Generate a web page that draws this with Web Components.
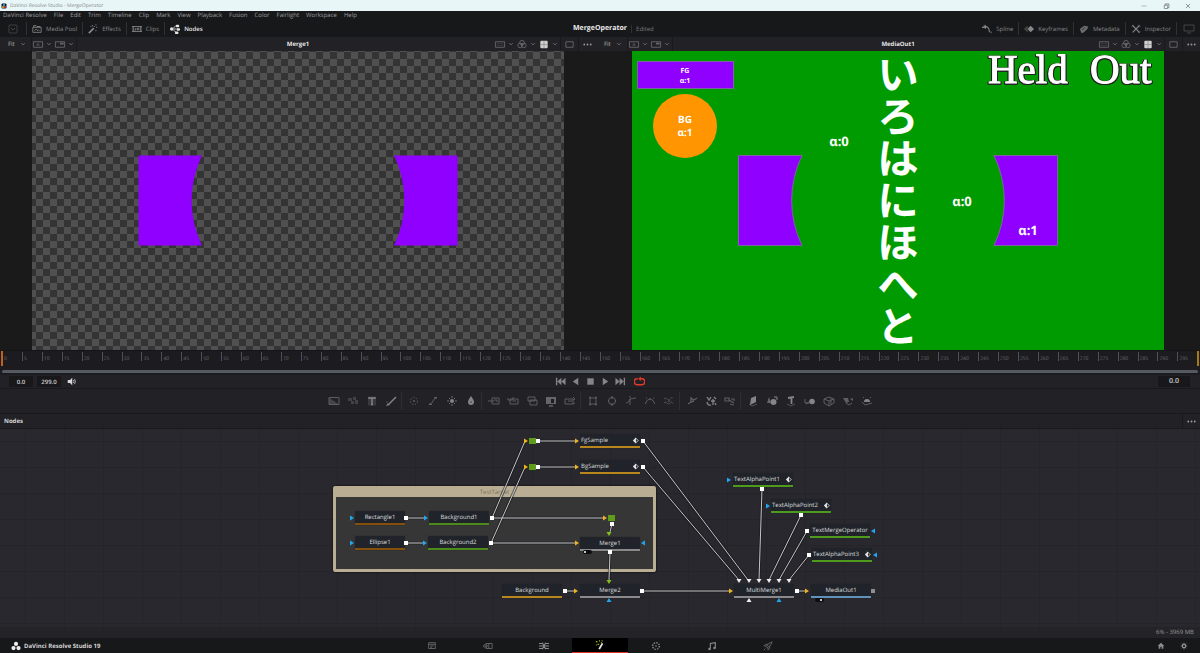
<!DOCTYPE html>
<html lang="en">
<head>
<meta charset="utf-8">
<title>DaVinci Resolve Studio - MergeOperator</title>
<style>
  html, body { margin: 0; background: #17181a; }
  body { font: 6px/8px "Open Sans", "Noto Sans", "Noto Sans CJK JP", sans-serif; color: #8c8c8e; text-rendering: geometricPrecision; }
</style>
</head>
<body>
<resolve-app></resolve-app>

<script>
const ICONS = {
  panel: '<rect x="2" y="2" width="8" height="8" rx="1" opacity=".4"/><path d="M4 5l2 2 2-2" opacity=".5"/>',
  media: '<path d="M2 4V2h3l1 1h4M1 4h10v6H1zM3 8l2-2 2 2 1-1 1 1"/>',
  wand: '<path d="M1 11l6-6" stroke-width="2"/><path d="M5 2h1M9 1h1M10 4h1M9 8h1M3 3h1M7 3h1" stroke-width="1.4"/>',
  clips: '<path d="M0 3h12v6H0zM2 3v6M10 3v6M4 5v3M6 5h2v2H6z"/>',
  nodes: '<g class="f"><circle cx="2" cy="6" r="2"/><rect x="7" y="1" width="4" height="3" rx="1"/><rect x="8" y="5" width="4" height="3" rx="1"/><rect x="6" y="9" width="4" height="3" rx="1"/></g><path d="M3 6h5M4 5l3-3M4 7l3 3"/>',
  spline: '<path d="M0 4h5M2 2l5 2q2 2 2 6" stroke-width="1.3"/><path d="M4 1v5M11 9v2" />',
  keys: '<path class="f" d="M8 2l4 4-4 4-4-4z"/><path class="f" d="M4 2L0 6l4 4 1-2-2-2 2-2z" opacity=".4"/>',
  meta: '<path d="M1 6l5-4 5 1-1 3-4 4-3 1z" class="f" opacity=".75"/><path d="M4 7l3-3" stroke="#17181a"/>',
  tools: '<path d="M2 2l8 8M10 2l-8 8" stroke-width="1.5"/><path d="M1 3l2-2M9 11l2-2M9 1l2 2"/>',
  monitor: '<path d="M1 2h10v6H1zM4 10h4" opacity=".45"/>',
  lut: '<path d="M1 3h10v6H1z"/><path class="f" d="M6 4l2 3H4z" opacity=".7"/>',
  dual: '<path d="M1 3h10v6H1z"/><path class="f" d="M6 4h4v2H6z"/>',
  frame: '<path d="M1 3h10v6H1z"/><path d="M3 5h6v2H3z" opacity=".35"/>',
  rect: '<path d="M2 3h8v6H2z"/>',
  rgb: '<circle cx="6" cy="4" r="2.5"/><circle cx="4" cy="7" r="2.5"/><circle cx="8" cy="7" r="2.5"/><circle class="f" cx="6" cy="6" r="1.5"/>',
  grid: '<rect class="f" x="2" y="2" width="8" height="8" rx="1"/><path d="M2 6h8M6 2v8" stroke="#77777b" stroke-width=".6"/>',
  chev: '<path d="M4 5l2 2 2-2"/>',
  dots: '<g class="f"><circle cx="2.5" cy="6" r="1"/><circle cx="6" cy="6" r="1"/><circle cx="9.500" cy="6" r="1"/></g>',
  min: '<path d="M3 6h6" opacity=".5"/>',
  restore: '<path d="M4 5h4v4H4zM5 5V3.500h4.500V8H8" stroke-width=".8"/>',
  close: '<path d="M3.500 3.500l5 5M8.500 3.500l-5 5" stroke-width=".8"/>',
  speaker: '<path class="f" d="M1 4h3l3-3v10L4 8H1z"/><path d="M8.500 4q1.500 2 0 4M10 2.500q2.500 3.500 0 7"/>',
  first: '<path class="f" d="M1 2h1.500v8H1zM7 2v8L2.500 6zM11.500 2v8L7 6z"/>',
  back: '<path class="f" d="M9 2v8L3 6z"/>',
  stop: '<rect class="f" x="2.500" y="2.500" width="7" height="7"/>',
  play: '<path class="f" d="M3 2v8l6-4z"/>',
  last: '<path class="f" d="M9.500 2H11v8H9.500zM5 2v8l4.500-4zM.500 2v8L5 6z"/>',
  loop: '<path d="M4 3H3.500a2.500 2.500 0 000 6.500h5a2.500 2.500 0 000-6.500H6.500" stroke-width="1.6"/><path class="f" d="M7.500.500v5L4.500 3z"/>',
  bg: '<path d="M1 2.500h10v7H1z"/><path class="f" opacity=".6" d="M1 2.500l10 7H1z"/>',
  noise: '<g class="f" opacity=".55"><rect x="1" y="3" width="4" height="3"/><rect x="6" y="2" width="3" height="3"/><rect x="4" y="6" width="3" height="3"/><rect x="8" y="5" width="3" height="4"/></g>',
  text: '<rect class="f" x="2" y="1.500" width="8" height="9" opacity=".25"/><path d="M3 4V3h6v1M6 3v6M5 9.500h2" stroke-width="1.400"/>',
  brush: '<path d="M4 9l7-7" stroke-width="1.500"/><path class="f" d="M1 11l2-3 2 2z"/><path d="M2 6v2" opacity=".4"/>',
  tracker: '<circle cx="6" cy="6" r="3.500" stroke-dasharray="1.500 1.500"/><circle class="f" cx="6" cy="6" r="1"/>',
  curve: '<path d="M2 9q3 0 4-3t4-3M2 9.500h3M7 2.500h3"/>',
  bright: '<circle class="f" cx="6" cy="6" r="2"/><path d="M6 1v2M6 9v2M1 6h2M9 6h2M3 3l1 1M8 8l1 1M9 3L8 4M4 8L3 9" stroke-width=".8"/>',
  drop: '<path class="f" d="M6 1q3 4 3 6a3 3 0 01-6 0q0-2 3-6z"/><path d="M6 6v2" stroke="#444"/>',
  mergeA: '<path d="M4 3h7v6H4zM0 6h6M6 5h3v2" />',
  mergeB: '<path d="M3 4h8v5H3zM1 3v2h5V2M6 6h3" />',
  layers: '<path d="M2 2h7v4H2zM4 5h7v5H4z"/><path class="f" opacity=".4" d="M4 5h7v1H4z"/>',
  matte: '<rect class="f" x="1" y="2" width="10" height="7" opacity=".7"/><path fill="#1e1e22" stroke="none" d="M6 4h3v4H6z"/><path d="M4 11h4"/>',
  resize: '<path d="M1 4h8v5H1zM9 2l2 2-2 1M4 6h4M9 9l2-1" />',
  mrect: '<path d="M3 3h6v6H3z"/><path d="M2 2.500h2M8 2.500h2M2 9.500h2M8 9.500h2" stroke-width="1.500"/>',
  mell: '<circle cx="6" cy="6" r="3.500"/><path d="M5 2.500h2M2 6h1M9 6h1M5 9.500h2" stroke-width="1.800"/>',
  poly: '<path d="M1 8q3 0 4-4l6-1M5 4v6M4 2h2" />',
  bsp: '<path d="M1 9q2-5 5-5t5 5M2 3h1M9 3h1M5 4h2" />',
  ranges: '<path d="M1 4q2-2 3 0t3 0 3-1M1 8q2-2 3 0t3 0 3 1M5 6h3" stroke-dasharray="2 .700"/>',
  pemit: '<path d="M2 9l3-2V3l3 2 3-2M5 7l3-1" stroke-width="1.400"/>',
  prend: '<path d="M2 2l2 3 2-3M2 7q1 4 4 3M6 6h4M8 4v6M9 2l2 2M10 8l1 2" stroke-width="1.300"/>',
  pmerge: '<path d="M1 3h4v3H1zM5 5l5 3M7 4h3v2M6 9l4 1" stroke-width="1.200"/>',
  plane: '<path class="f" d="M4 3l5-2v6L3 10z"/><path d="M2 9l3 2 5-2" opacity=".5"/>',
  shapes: '<path class="f" d="M3 2l2 6H1z" opacity=".7"/><circle class="f" cx="7.500" cy="7" r="3"/><path d="M8 2h3v3"/>',
  t3d: '<path d="M3 3l6-1M6.500 3v6" stroke-width="1.800"/><path d="M2 9l4 2 4-2" opacity=".5"/>',
  sphere: '<circle class="f" cx="8" cy="6.500" r="2.800"/><path d="M1 4v4h4M2 9l3-2" opacity=".6"/>',
  cube: '<path d="M1 4l5-2 5 2v4l-5 3-5-3zM1 4l5 2 5-2M6 6v5M8 3v6"/>',
  camera: '<path class="f" d="M1 3h5l1 4-3 1zM8 4l3-1v3z"/><path d="M4 8l3 2 3-2"/>',
  spot: '<path class="f" d="M3 7a3 3 0 016 0z"/><path d="M1 7l3 3 7-2M2 3l1-1M9 2l1 1" opacity=".6"/>',
  logo: '<g class="f"><circle cx="6" cy="3.500" r="2.500"/><circle cx="3" cy="8.500" r="2.500"/><circle cx="9" cy="8.500" r="2.500"/></g>',
  applogo: '<rect x="1" y="1" width="10" height="10" rx="2" fill="#101828" stroke="none"/><circle cx="6" cy="4" r="2" fill="#38b6e8" stroke="none"/><circle cx="4" cy="8" r="2" fill="#e8c12a" stroke="none"/><circle cx="8" cy="8" r="2" fill="#e2394a" stroke="none"/>',
  pmedia: '<path d="M2 2h8v7H2zM2 4h8M4 6h4M4 7.500h2" />',
  pcut: '<path d="M4 3h7v6H4zM4 3L0 6l4 3M7 3v6M2 6h4"/>',
  pedit: '<path d="M0 3h5M7 3h5M0 6h12M0 9h5M7 9h5M4 2l4 8M8 2L4 10" stroke-width="1.300"/>',
  pfusion: '<path d="M5 11l4-7" stroke="#e8e8e8" stroke-width="2.200"/><path d="M1 2h2M5 1h1M3 5h2M8 1h1M7 3h1M1 6h1" stroke="#c4d42a" stroke-width="1.300"/>',
  pcolor: '<circle cx="6" cy="6" r="4" stroke-dasharray="1.800 1.300" stroke-width="1.600"/><circle class="f" cx="6" cy="6" r="1"/>',
  pnote: '<path d="M4 9V3l6-1v6" stroke-width="1.300"/><g class="f"><circle cx="3" cy="9.500" r="1.500"/><circle cx="9" cy="8.500" r="1.500"/></g>',
  pdeliver: '<path d="M4 7q2-5 7-6-1 5-6 7zM4 6H1l2-2h3M6 8v3l2-2V6M3 9l-2 2"/>',
  home: '<path class="f" d="M6 1l5 5H9.500v4h-2.500V7H5v3H2.500V6H1z"/>',
  gear: '<circle cx="6" cy="6" r="2.600" stroke-width="2"/><path d="M6 1v2M6 9v2M1 6h2M9 6h2M2.500 2.500l1 1M8.500 8.500l1 1M9.500 2.500l-1 1M3.500 8.500l-1 1"/>'
};

function define(name, render, css) {
  customElements.define(name, class extends HTMLElement {
    connectedCallback() {
      if (this.shadowRoot) return;
      const root = this.attachShadow({ mode: "open" });
      const tpl = document.createElement("template");
      tpl.innerHTML = `<style>*{box-sizing:border-box}button,input,select{font:inherit;color:inherit;background:none;border:0;margin:0;padding:0;border-radius:0;text-rendering:inherit}${css}</style>${render(this)}`;
      root.append(tpl.content.cloneNode(true));
    }
  });
}

define("ui-icon", el => `<svg viewBox="0 0 12 12" aria-hidden="true">${ICONS[el.getAttribute("name")]}</svg>`,
  `:host{display:block;width:12px;height:12px;flex:none}
   svg{display:block;width:100%;height:100%;fill:none;stroke:currentColor;stroke-width:1}
   .f{fill:currentColor;stroke:none}`);

define("title-bar", () => `<ui-icon name="applogo"></ui-icon><span>DaVinci Resolve Studio - MergeOperator</span>
  <nav><button aria-label="Minimize"><ui-icon name="min"></ui-icon></button><button aria-label="Restore"><ui-icon name="restore"></ui-icon></button><button aria-label="Close"><ui-icon name="close"></ui-icon></button></nav>`,
  `:host{display:flex;align-items:center;height:11px;background:#e8f6f8;color:#85888c;font-size:5px;gap:3px;padding:0 1px}
   :host>ui-icon{width:6px;height:6px} nav{margin-left:auto;display:flex} button{width:22px;display:flex;justify-content:center} nav ui-icon{color:#666;width:10px;height:10px}`);

define("menu-bar", () => ["DaVinci Resolve","File","Edit","Trim","Timeline","Clip","Mark","View","Playback","Fusion","Color","Fairlight","Workspace","Help"].map(m => `<button>${m}</button>`).join(""),
  `:host{display:flex;height:9px;padding:0 3px;gap:7px;background:#17181a;color:#9e9ea0} button{line-height:9px}`);

define("tool-button", el => `<button><ui-icon name="${el.getAttribute("icon")}"></ui-icon><slot></slot></button>`,
  `:host{display:block;color:#88888a} :host([active]){color:#e4e4e4;font-weight:600}
   button{height:13px;padding:0 5px;display:flex;align-items:center;gap:4px} ui-icon{width:10px;height:10px}`);

define("tool-bar", () => `
  <div class="g l"><button class="p" aria-label="Panels"><ui-icon name="panel"></ui-icon></button>
    <tool-button icon="media">Media Pool</tool-button><tool-button icon="wand">Effects</tool-button><tool-button icon="clips">Clips</tool-button><tool-button icon="nodes" active>Nodes</tool-button></div>
  <strong>MergeOperator</strong>
  <div class="g"><span class="ed">Edited</span><div class="g r"><tool-button icon="spline">Spline</tool-button><tool-button icon="keys">Keyframes</tool-button><tool-button icon="meta">Metadata</tool-button><tool-button icon="tools">Inspector</tool-button><button class="p m" aria-label="Monitor"><ui-icon name="monitor"></ui-icon></button></div></div>`,
  `:host{display:grid;grid-template-columns:1fr auto 1fr;align-items:center;height:17px;background:#17181a}
   .g{display:flex;align-items:center} .r{margin-left:auto} .r>*+*,.l>*+*{border-left:1px solid #303134}
   .p{width:26px;height:13px;display:flex;justify-content:center;align-items:center;color:#77777a} .m{width:24px}
   strong{font-size:7px;color:#ececec} .ed{margin-left:4px;padding-left:4px;border-left:1px solid #303134;color:#77777a}`);

define("viewer-panel", el => {
  const pair = (n, l) => `<button class="pair ${n}" aria-label="${l}"><ui-icon name="${n}"></ui-icon><ui-icon class="c" name="chev"></ui-icon></button>`;
  return `<header><div class="l"><label class="fit"><select aria-label="Zoom"><option>Fit</option></select><ui-icon class="c" name="chev"></ui-icon></label><i></i>${pair("lut","Lookup")}${pair("dual","Dual view")}<i></i></div>
    <strong>${el.getAttribute("label")}</strong>
    <div class="r">${pair("frame","Region")}${pair("rgb","Channels")}${pair("grid","Guides")}<i></i><button class="one" aria-label="Single view"><ui-icon name="rect"></ui-icon></button><i></i><button class="one d" aria-label="Options"><ui-icon name="dots"></ui-icon></button></div></header>
    <div class="stage"><slot></slot></div>`; },
  `:host{display:block;background:#1a1a1a;min-width:0}
   header{display:grid;grid-template-columns:1fr auto 1fr;align-items:center;height:14px;background:#212126}
   .l,.r{display:flex;align-items:center;color:#66666a} .r{justify-content:flex-end}
   .fit{display:flex;align-items:center;width:31px;padding-left:8px;color:#b0b0b2} select{appearance:none;width:10px;height:12px;line-height:12px}
   i{width:1px;height:14px;background:#19191c} .pair{display:flex;align-items:center;width:22px} .pair ui-icon{width:12px;height:11px} .pair .c,.c{width:10px;height:10px;color:#7c7c80}
   .grid ui-icon:first-child{color:#cfcfcf} .one{width:17px;display:flex;justify-content:center} .d{color:#9a9a9c}
   .one ui-icon{width:11px;height:11px}
   strong{color:#e4e4e4;font-weight:700} .stage{padding:0 var(--inset,32px)}`);

const HOLD_L = "M106.500 104.500H170A103 103 0 00170 194.500H106.500z", HOLD_R = "M425.500 104.500H362A103 103 0 01362 194.500H425.500z";
define("merge-picture", () => `<svg viewBox="0 0 532 299" role="img" aria-label="Merge1 output">
   <defs><pattern id="ck" x="4" y="1" width="14" height="14" patternUnits="userSpaceOnUse"><rect width="14" height="14" fill="#505050"/><path d="M0 0h7v7H0zM7 7h7v7H7z" fill="#343434"/></pattern></defs>
   <rect width="532" height="299" fill="url(#ck)"/><path d="${HOLD_L}${HOLD_R}" fill="#9000ff"/></svg>`,
  `:host,svg{display:block} svg{width:100%}`);

define("media-picture", () => `<svg viewBox="0 0 532 299" role="img" aria-label="MediaOut1 output">
   <rect width="532" height="299" fill="#009b00"/>
   <g fill="#9000ff" stroke="#7c64a0" stroke-width="1"><path d="${HOLD_L}"/><path d="${HOLD_R}"/><rect x="5.500" y="10.500" width="96" height="27"/></g>
   <circle cx="53" cy="75" r="32" fill="#ff9500"/>
   <g class="t"><text x="53" y="22" font-size="7">FG</text><text x="53" y="32" font-size="7">α:1</text><text x="53" y="72" font-size="10">BG</text><text x="53" y="85" font-size="10">α:1</text>
   <text x="207" y="95" font-size="13">α:0</text><text x="330" y="155" font-size="13">α:0</text><text x="396" y="184" font-size="13">α:1</text></g>
   <text class="k" x="266" y="2">いろはにほへと</text>
   <g class="h"><text x="356" y="32">Held</text><text x="458" y="32">Out</text></g></svg>`,
  `:host,svg{display:block} svg{width:100%;overflow:visible} text{fill:#fff} .t{font-family:"Noto Sans",sans-serif;font-weight:700;text-anchor:middle}
   .k{font:700 42px "Noto Sans CJK JP",sans-serif;writing-mode:vertical-rl}
   .h{font:41px/41px "Liberation Serif",serif} .h text{stroke:#fff;stroke-width:1;filter:drop-shadow(1px 0 0 #222) drop-shadow(-1px 0 0 #222) drop-shadow(0 1px 0 #222)}`);

define("time-ruler", () => `<div class="ticks">${Array.from({length:60},(_, i) => `<span>${i*5}</span>`).join("")}</div><div class="bar"></div>`,
  `:host{display:block;background:#1c1c20;border-top:1px solid #151517;height:25px}
   .ticks{display:flex;height:15px;margin:0 1px;border-left:2px solid #c2611c;border-right:2px solid #a87a16}
   span{flex:1 1 0;min-width:0;height:9px;margin-top:1px;padding-left:1px;border-left:1px solid #505054;color:#6a6a6e;font-size:5px;line-height:14px}
   span:first-child{border-color:transparent;padding:0}
   .bar{margin:4px 2px 0;height:3px;border-radius:2px;background:#555962}`);

define("transport-bar", () => `<div class="l"><input aria-label="Start" value="0.0"><input aria-label="End" value="299.0"><button aria-label="Audio"><ui-icon name="speaker"></ui-icon></button></div>
  <div class="c">${["first","back","stop","play","last","loop"].map(n => `<button class="${n}" aria-label="${n}"><ui-icon name="${n}"></ui-icon></button>`).join("")}</div>
  <div class="r"><input aria-label="Current time" value="0.0"></div>`,
  `:host{display:grid;grid-template-columns:1fr auto 1fr;align-items:center;height:14px;background:#212126;border-bottom:1px solid #19191c}
   div{display:flex;align-items:center} .l{padding-left:9px;gap:4px} input{width:24px;height:11px;background:#18181a;color:#cfcfcf;text-align:center;font-weight:600}
   .l button{color:#d8d8d8;margin-left:2px} .l ui-icon{width:9px;height:9px} .c{color:#858587;padding-left:3px} .c button{width:15px;display:flex;justify-content:center} .c .loop{width:23px;color:#e0392b} .c ui-icon{width:11px;height:11px}
   .r{justify-content:flex-end;padding-right:10px} .r input{width:32px;font-size:7px}`);

define("effects-bar", () => [["bg","noise","text","brush"],["tracker","curve","bright","drop"],["mergeA","mergeB","layers","matte","resize"],["mrect","mell","poly","bsp","ranges"],["pemit","prend","pmerge"],["plane","shapes","t3d","sphere","cube","camera","spot"]]
  .map(g => `<div>${g.map(n => `<button class="${n}" aria-label="${n}"><ui-icon name="${n}"></ui-icon></button>`).join("")}</div>`).join(""),
  `:host{display:flex;justify-content:center;align-items:center;height:25px;background:#212126;color:#5e5e61;border-bottom:1px solid #19191c}
   div{display:flex} div+div{border-left:1px solid #2f2f33;margin-left:1px;padding-left:2px} button{width:19px;height:18px;display:flex;justify-content:center;align-items:center}
   .text,.bright,.drop,.prend,.matte,.brush,.plane,.shapes,.sphere,.spot,.t3d{color:#858588} ui-icon{width:12px;height:12px}`);

define("graph-node", el => `<span><slot></slot></span>${el.hasAttribute("lock") ? '<svg viewBox="0 0 8 8" aria-hidden="true"><path d="M4 1L1 4l3 3z" fill="#e8e8e8"/><path d="M4 1l3 3-3 3z" fill="none" stroke="#e8e8e8"/></svg>' : ""}`,
  `:host{position:absolute;width:60px;height:14px;display:flex;align-items:center;justify-content:center;background:#20242a;border-radius:2px 2px 0 0;box-shadow:0 0 1px #15161a;border-bottom:2px solid var(--tone,#8a8a8c);box-sizing:border-box;color:#dededf;white-space:nowrap}
   :host([small]){width:50px} :host([lock]){justify-content:space-between;padding:0 1px} svg{width:7px;height:7px}`);

const NODES = [["FgSample",580,434,"#b8861c","lock"],["BgSample",580,460,"#b8861c","lock"],["Rectangle1",355,511,"#85500c","small"],["Ellipse1",355,536,"#85500c","small"],["Background1",429,511,"#4d8a1c",""],["Background2",428,536,"#4d8a1c",""],["Merge1",580,537,"#8a8a8c",""],["Background",502,584,"#b8861c",""],["Merge2",580,584,"#8a8a8c",""],["TextAlphaPoint1",733,473,"#4d9a1c","lock"],["TextAlphaPoint2",771,499,"#4d9a1c","lock"],["TextMergeOperator",810,524,"#4d9a1c",""],["TextAlphaPoint3",812,548,"#4d9a1c","lock"],["MultiMerge1",734,584,"#8a8a8c",""],["MediaOut1",811,584,"#5f92ba",""]];
const EDGES = [[406,518,424,518],[406,543,423,543],[492,518,603,518],[491,543,575,543],[492,518,525,441],[491,543,525,467],[538,441,575,441],[538,467,575,467],[612,524,610,532],[610,552,609,580],[565,591,574,591],[642,591,729,591],[643,441,748,580],[643,467,739,580],[762,489,759,580],[801,515,769,580],[807,531,779,580],[809,555,789,580],[797,591,805,591]];
const OUTS = [[406,518],[406,543],[492,518],[491,543],[538,441],[538,467],[612,524],[610,552],[565,591],[642,591],[643,441],[643,467],[762,489],[801,515],[807,531],[809,555],[797,591]];
const Y = "#f0b41c", B = "#22a7ee", G = "#7cc41c", W = "#eeeeee";
const PINS = [[352,518,0,B],[352,543,0,B],[426,518,0,B],[425,543,0,B],[605,518,0,Y],[577,543,0,Y],[526,441,0,Y],[526,467,0,Y],[577,441,0,Y],[577,467,0,Y],[576,591,0,Y],[731,591,0,Y],[807,591,0,Y],[729,480,0,B],[768,506,0,B],[643,543,180,B],[873,531,180,B],[875,555,180,B],[609,534,90,G],[609,582,90,G],[739,581,90,W],[749,581,90,W],[759,581,90,W],[769,581,90,W],[779,581,90,W],[789,581,90,W],[609,600,270,B],[779,600,270,B],[749,600,270,W]];

define("node-graph", () => `<section class="group"><h2>TestTarget</h2></section>
  ${NODES.map(([t,x,y,c,a]) => `<graph-node ${a} style="left:${x}px;top:${y-429}px;--tone:${c}">${t}</graph-node>`).join("")}
  <svg aria-hidden="true"><g transform="translate(0 -429)">
  <g stroke="#15161a" stroke-width="3" opacity=".5">${EDGES.map(e => `<path d="M${e[0]} ${e[1]}L${e[2]} ${e[3]}"/>`).join("")}</g>
  <g stroke="#c4c4c6" stroke-width="1">${EDGES.map(e => `<path d="M${e[0]} ${e[1]}L${e[2]} ${e[3]}"/>`).join("")}</g>
  ${OUTS.map(o => `<rect x="${o[0]-2}" y="${o[1]-2}" width="4" height="4" fill="#fff"/>`).join("")}
  ${PINS.map(p => `<path transform="translate(${p[0]} ${p[1]}) rotate(${p[2]})" d="M-2-2.500L2 0-2 2.500z" fill="${p[3]}"/>`).join("")}
  <g fill="#5f9c1c"><rect x="529" y="438" width="7" height="6"/><rect x="529" y="464" width="7" height="6"/><rect x="608" y="515" width="7" height="6"/></g>
  <rect x="871" y="589" width="4" height="4" fill="#8e8e90"/>
  <g fill="#0e0e10"><rect x="583" y="550" width="9" height="4" rx="2"/><rect x="815" y="598" width="9" height="4" rx="2"/></g><circle cx="585" cy="552" r="1" fill="#fff"/><circle cx="821" cy="600" r="1" fill="#fff"/>
  </g></svg>`,
  `:host{display:block;position:relative;overflow:hidden;background:linear-gradient(90deg,#242429 1px,transparent 1px) 25px 0/39px 26px,linear-gradient(#242429 1px,transparent 1px) 0 12px/39px 26px,#28282e}
   svg{position:absolute;inset:0;width:100%;height:100%}
   .group{position:absolute;left:333px;top:57px;width:323px;height:86px;border:3px solid #b9ae93;background:#363636;border-radius:2px;box-shadow:0 0 2px #000}
   h2{margin:0;height:8px;background:#b9ae93;color:#7b745f;font-size:6px;line-height:6px;font-weight:400;text-align:center}`);

define("page-nav", () => `<div class="brand"><ui-icon name="logo"></ui-icon>DaVinci Resolve Studio 19</div>
  <nav>${["pmedia","pcut","pedit","pfusion","pcolor","pnote","pdeliver"].map(n => `<a href="#${n}" class="${n}" aria-label="${n.slice(1)}"><ui-icon name="${n}"></ui-icon></a>`).join("")}</nav>
  <div class="r"><button aria-label="Home"><ui-icon name="home"></ui-icon></button><button aria-label="Settings"><ui-icon name="gear"></ui-icon></button></div>`,
  `:host{display:grid;grid-template-columns:1fr auto 1fr;align-items:center;height:15px;background:#17181a;color:#6e6e70}
   .brand{display:flex;align-items:center;gap:3px;padding-left:11px;color:#d4d4d6;font-weight:700} .brand ui-icon{width:10px;height:10px;color:#eee}
   nav{display:flex} a{width:56px;height:15px;display:flex;justify-content:center;align-items:center;color:inherit} a ui-icon{width:10px;height:10px} .pfusion{background:#000;border-bottom:1px solid #d8352a}
   .pnote,.pcolor,.pedit{color:#8a8a8c}
   .r{display:flex;justify-content:flex-end;padding-right:5px} .r button{width:23px;display:flex;justify-content:center} .r ui-icon{width:8px;height:8px;color:#8c8c8e}`);

define("resolve-app", () => `<title-bar></title-bar><menu-bar></menu-bar><tool-bar></tool-bar>
  <main><viewer-panel label="Merge1"><merge-picture></merge-picture></viewer-panel><viewer-panel class="b" label="MediaOut1"><media-picture></media-picture></viewer-panel></main>
  <time-ruler></time-ruler><transport-bar></transport-bar><effects-bar></effects-bar>
  <div class="head"><h1>Nodes</h1><button aria-label="Node options"><ui-icon name="dots"></ui-icon></button></div>
  <node-graph></node-graph><footer>6% - 3969 MB</footer><page-nav></page-nav>`,
  `:host{display:flex;flex-direction:column;min-height:100vh}
   main{display:grid;grid-template-columns:calc(50% - 4px) 1fr} .b{--inset:36px}
   .head{display:flex;align-items:center;justify-content:space-between;height:15px;background:#212126;border-bottom:1px solid #19191c;padding-left:4px} h1{margin:0;font-size:6px;font-weight:700;color:#d6d6d6}
   .head button{width:18px;height:14px;display:flex;justify-content:center;align-items:center;border-left:1px solid #19191c;color:#a0a0a2} .head ui-icon{width:11px;height:11px}
   node-graph{flex:1 0 180px} footer{height:11px;line-height:11px;background:#232328;text-align:right;padding-right:6px;color:#9a9a9c}`);
</script>
</body>
</html>
